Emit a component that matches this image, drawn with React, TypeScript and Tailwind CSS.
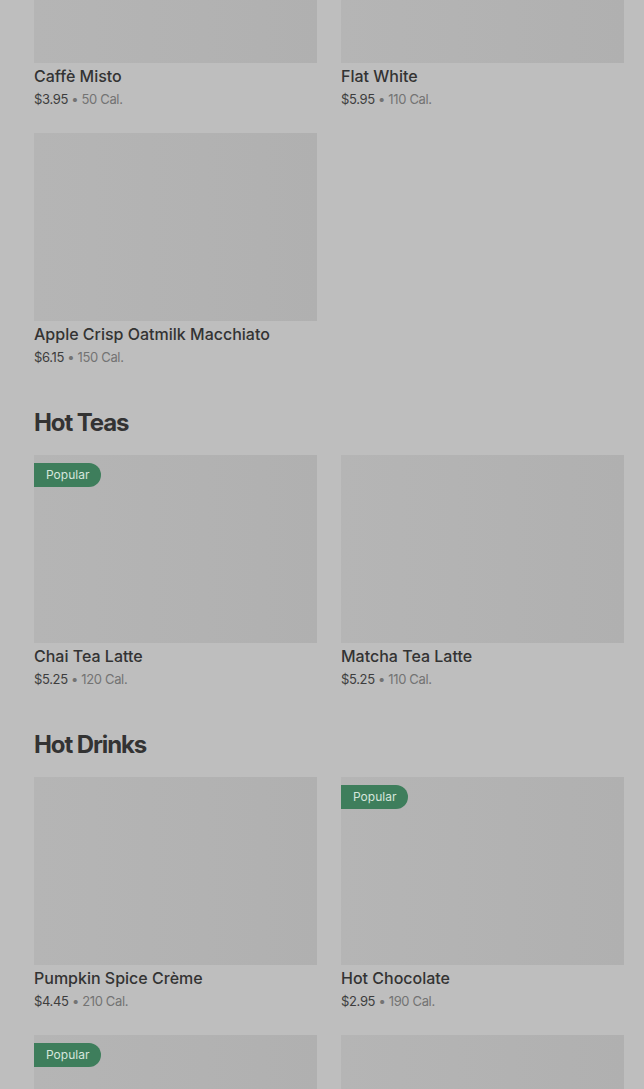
import React from "react";

type Item = { name?: string; price?: string; cal?: string; popular?: boolean };

const sections: { title?: string; items: Item[] }[] = [
  {
    items: [
      { name: "Caffè Misto", price: "$3.95", cal: "50 Cal." },
      { name: "Flat White", price: "$5.95", cal: "110 Cal." },
      { name: "Apple Crisp Oatmilk Macchiato", price: "$6.15", cal: "150 Cal." },
    ],
  },
  {
    title: "Hot Teas",
    items: [
      { name: "Chai Tea Latte", price: "$5.25", cal: "120 Cal.", popular: true },
      { name: "Matcha Tea Latte", price: "$5.25", cal: "110 Cal." },
    ],
  },
  {
    title: "Hot Drinks",
    items: [
      { name: "Pumpkin Spice Crème", price: "$4.45", cal: "210 Cal." },
      { name: "Hot Chocolate", price: "$2.95", cal: "190 Cal.", popular: true },
      // last row runs past the bottom of the viewport, only the photos show
      { popular: true },
      {},
    ],
  },
];

function Card({ item }: { item: Item }) {
  return (
    <div className="flex flex-col">
      <div className="relative h-[188px] w-full bg-gradient-to-r from-[#b5b5b5] to-[#b0b0b0]">
        {item.popular && (
          <span className="absolute left-0 top-2 flex h-6 items-center rounded-r-full bg-[#3e7e5c] px-3 text-[12px] text-[#d6e6dc]">
            Popular
          </span>
        )}
      </div>
      {item.name && (
        <>
          <div className="mt-[3px] text-[16px] font-medium leading-5 text-[#333333]">{item.name}</div>
          <div className="mt-1 text-[13px] leading-[18px] tracking-[-0.35px] text-[#3d3d3d]">
            {item.price}
            <span className="text-[#737373]"> • {item.cal}</span>
          </div>
        </>
      )}
    </div>
  );
}

export default function App() {
  return (
    <div
      className="h-[1089px] w-full overflow-hidden bg-[#bebebe]"
      style={{ fontFamily: "Inter, 'Noto Sans', sans-serif" }}
    >
      <div className="-mt-[125px] pl-[34px] pr-5">
        {sections.map((s, i) => (
          <section key={i} className={s.title ? "mt-10" : ""}>
            {s.title && (
              <h2 className="pt-px text-[24px] font-bold leading-8 tracking-[-1.1px] text-[#333333]">{s.title}</h2>
            )}
            <div className={`grid grid-cols-2 gap-x-6 gap-y-[25px] ${s.title ? "mt-[16px]" : ""}`}>
              {s.items.map((it, j) => (
                <Card key={j} item={it} />
              ))}
            </div>
          </section>
        ))}
      </div>
    </div>
  );
}
